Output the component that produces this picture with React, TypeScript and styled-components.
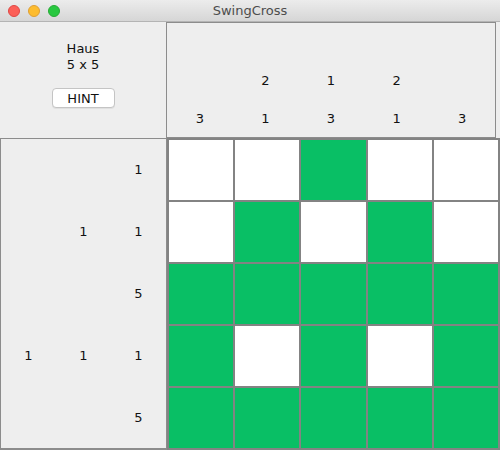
import styled, { createGlobalStyle } from "styled-components";

const GlobalStyle = createGlobalStyle`
    html, body {
        margin: 0;
        padding: 0;
        background: #eeeeee;
    }
    body {
        font-family: "DejaVu Sans", "Liberation Sans", sans-serif;
        color: #111;
    }
`;

const Window = styled.div`
    width: 500px;
    height: 450px;
    display: flex;
    flex-direction: column;
    background: #eeeeee;
    overflow: hidden;
`;

const TitleBar = styled.div`
    height: 22px;
    flex: none;
    box-sizing: border-box;
    border-bottom: 1px solid #b4b4b4;
    background: linear-gradient(#ececec, #d6d6d6);
    display: flex;
    align-items: center;
    position: relative;
    padding-left: 8px;
    gap: 8px;
`;

const Light = styled.span<{ color: string; edge: string }>`
    width: 12px;
    height: 12px;
    border-radius: 50%;
    background: ${({ color }) => color};
    box-sizing: border-box;
    border: 0.5px solid ${({ edge }) => edge};
`;

const Title = styled.div`
    position: absolute;
    left: 0;
    right: 0;
    text-align: center;
    font-size: 13px;
    color: #4d4d4d;
    pointer-events: none;
`;

const Board = styled.div`
    flex: 1;
    display: grid;
    grid-template-columns: 167px 1fr;
    grid-template-rows: 116px 1fr;
`;

const InfoPanel = styled.div`
    border-right: 1px solid #8c8c8c;
    display: flex;
    flex-direction: column;
    align-items: center;
    padding-top: 19px;
    box-sizing: border-box;
    font-size: 13px;
    line-height: 16px;
`;

const HintButton = styled.button`
    margin-top: 15px;
    width: 63px;
    height: 20px;
    background: #ffffff;
    border: 1px solid #c4c4c4;
    border-radius: 4px;
    font-family: inherit;
    font-size: 13px;
    color: #111;
    padding: 0;
    box-shadow: 0 1px 0 rgba(0, 0, 0, 0.06);
`;

const ColumnClues = styled.div`
    border: 1px solid #8c8c8c;
    border-left: none;
    margin-right: 4px;
    display: grid;
    grid-template-columns: repeat(5, 1fr);
    grid-template-rows: repeat(3, 1fr);
    box-sizing: border-box;
    font-size: 13px;
`;

const RowClues = styled.div`
    border: 1px solid #8c8c8c;
    border-bottom-width: 2px;
    box-sizing: border-box;
    display: grid;
    grid-template-columns: repeat(3, 1fr);
    grid-template-rows: repeat(5, 1fr);
    font-size: 13px;
`;

const Clue = styled.div`
    display: flex;
    align-items: center;
    justify-content: center;
`;

const Grid = styled.div`
    display: grid;
    grid-template-columns: repeat(5, 1fr);
    grid-template-rows: repeat(5, 1fr);
    gap: 2px;
    padding: 2px;
    background: #838383;
    box-sizing: border-box;
`;

const Cell = styled.div<{ filled: boolean }>`
    background: ${({ filled }) => (filled ? "#09bf65" : "#ffffff")};
`;

const solution = [
    [0, 0, 1, 0, 0],
    [0, 1, 0, 1, 0],
    [1, 1, 1, 1, 1],
    [1, 0, 1, 0, 1],
    [1, 1, 1, 1, 1],
];

// clues padded to 3 slots, empty string = blank
const colClues = [
    ["", "", "3"],
    ["", "2", "1"],
    ["", "1", "3"],
    ["", "2", "1"],
    ["", "", "3"],
];

const rowClues = [
    ["", "", "1"],
    ["", "1", "1"],
    ["", "", "5"],
    ["1", "1", "1"],
    ["", "", "5"],
];

export default function App() {
    return (
        <>
            <GlobalStyle />
            <Window>
                <TitleBar>
                    <Light color="#fc5f57" edge="#df4744" />
                    <Light color="#fdbc2e" edge="#de9f34" />
                    <Light color="#28c840" edge="#27aa35" />
                    <Title>SwingCross</Title>
                </TitleBar>
                <Board>
                    <InfoPanel>
                        <div>Haus</div>
                        <div>5 x 5</div>
                        <HintButton>HINT</HintButton>
                    </InfoPanel>
                    <ColumnClues>
                        {[0, 1, 2].map((r) =>
                            colClues.map((col, c) => (
                                <Clue key={`${r}-${c}`} style={{ gridRow: r + 1, gridColumn: c + 1 }}>
                                    {col[r]}
                                </Clue>
                            ))
                        )}
                    </ColumnClues>
                    <RowClues>
                        {rowClues.map((row, r) =>
                            row.map((v, c) => <Clue key={`${r}-${c}`}>{v}</Clue>)
                        )}
                    </RowClues>
                    <Grid>
                        {solution.map((row, r) =>
                            row.map((v, c) => <Cell key={`${r}-${c}`} filled={v === 1} />)
                        )}
                    </Grid>
                </Board>
            </Window>
        </>
    );
}
